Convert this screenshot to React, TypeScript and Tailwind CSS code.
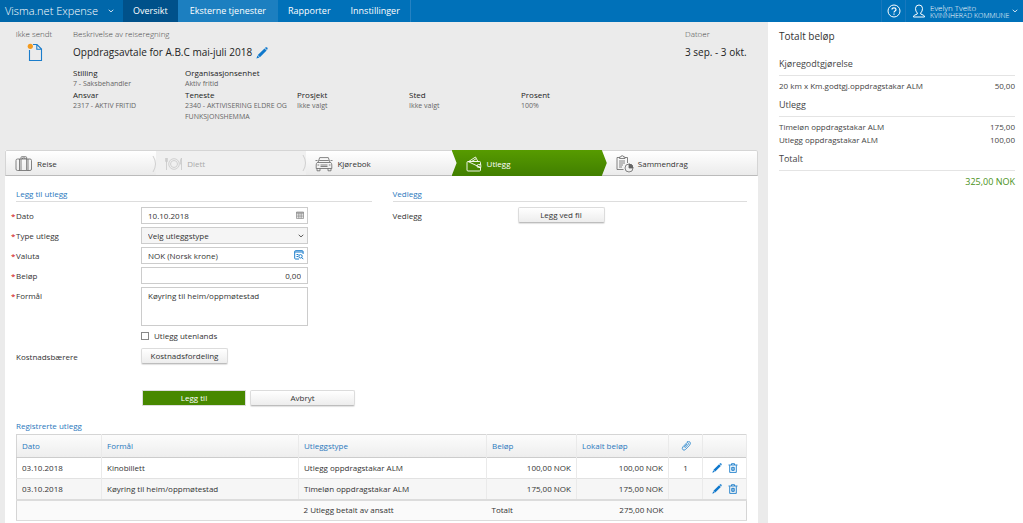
import React from "react";

const PencilIcon = ({ className }: { className: string }) => (
  <svg viewBox="0 0 12 12" className={className} aria-hidden="true">
    <path d="M1.800 8.100 8.500 1.400l2.100 2.100-6.700 6.700zM9 .9l.7-.6q.8-.4 1.500.3t.3 1.500l-.5.800zM1.500 8.600l1.900 1.900L.4 11.600z" fill="#0f78cc" />
  </svg>
);

const TrashIcon = () => (
  <svg viewBox="0 0 10 10" className="size-[10px]" fill="none" stroke="#1b7dcb" strokeWidth="0.9" aria-hidden="true">
    <path d="M.5 2h9M3.500 2V.7h3V2M1.700 2.200v7.200h6.600V2.200" />
    <path d="M3.700 4.300h2.600v3H3.700zM5 4v3.800" />
  </svg>
);

const ClipIcon = () => (
  <svg viewBox="0 0 12 12" className="mx-auto size-[10px]" fill="none" stroke="#3b8fd0" strokeWidth="1.100" aria-hidden="true">
    <path d="M4.500 8.500 8.700 4q.9-1.200-.1-1.900T6.800 2.300L2.300 7Q.8 9 2.200 10.400T5.400 10.200L10.400 5q1.800-2.400.2-3.900T7 1.200M3.600 7.400 7.400 3.500" />
  </svg>
);

const ChevronDown = ({ className }: { className: string }) => (
  <svg viewBox="0 0 6 4" className={className} fill="none" stroke="currentColor" strokeWidth="0.8" aria-hidden="true">
    <path d="M.7.8 3 2.900 5.300.8" />
  </svg>
);

const DocumentIcon = () => (
  <svg viewBox="0 0 17 20" className="h-5 w-[17px]" fill="none" aria-hidden="true">
    <path d="M7 2.500h4l4.500 4.500v11.500h-12V8M10.800 2.500v4.700h4.700" stroke="#1b7dcb" strokeWidth="1.100" />
    <circle cx="4.300" cy="4.300" r="2.600" fill="#f39a1e" />
  </svg>
);

const SuitcaseIcon = () => (
  <svg viewBox="0 0 18 16" className="h-4 w-[18px]" fill="none" stroke="#666" strokeWidth="0.8" aria-hidden="true">
    <rect x="1" y="3" width="15.500" height="11.500" rx="1.500" />
    <path d="M4.500 3v11.500M13 3v11.500M6 14V1.500q0-.8.800-.8h4q.8 0 .8.800V14M7.500 3V2h2.600v1" />
  </svg>
);

const PlateIcon = () => (
  <svg viewBox="0 0 18 14" className="h-[14px] w-[18px]" fill="none" stroke="#c8c8c8" strokeWidth="0.8" aria-hidden="true">
    <circle cx="9" cy="7" r="5.300" />
    <circle cx="9" cy="7" r="3.500" />
    <path d="M1.500 1v12M.6 1v3.500q.9 1 1.800 0V1M16.500 13V1q-1.400 1-1.200 6h1.200" />
  </svg>
);

const CarIcon = () => (
  <svg viewBox="0 0 18 16" className="h-4 w-[18px]" fill="none" stroke="#666" strokeWidth="0.8" aria-hidden="true">
    <path d="M3 6.500 4.700 1.600h8.600L15 6.500M2.200 6.500h13.600q1 .8 1 2.500v3.500H1.200V9q0-1.700 1-2.500zM.5 4.500h2M15.500 4.500h2M2 12.500v2.300h3v-2.300M13 12.500v2.300h3v-2.300M5.500 9h7M5.500 10.500h7M2.500 9h1.700M13.800 9h1.700M4.200 4.500h9.600" />
  </svg>
);

const WalletIcon = () => (
  <svg viewBox="0 0 16 16" className="size-4" fill="none" stroke="#fff" strokeWidth="0.9" aria-hidden="true">
    <path d="M2 5.500h11.500q1 0 1 1v2M14.500 11.500V14q0 1-1 1H2q-1 0-1-1V6.500q0-1 1-1zM3 5.300 9.500 1l2.300 4.300M6 5.300l4-2.500M14.800 8.500h-2.300q-1.500 0-1.500 1.500t1.500 1.500h2.300zM13 10h.5" />
  </svg>
);

const ClipboardIcon = () => (
  <svg viewBox="0 0 18 18" className="size-[18px]" fill="none" stroke="#666" strokeWidth="0.8" aria-hidden="true">
    <path d="M7.500 14.500H1V2.500h2.500M9 2.500h2.500V8M3.500 3.500V2h1.300q0-1.300 1.400-1.300T7.600 2H9v1.500zM3 6h6M3 8h6M3 10h4M3 12h3" />
    <circle cx="13" cy="13" r="4" />
    <path d="M13 13V9q4 .2 4 4z" fill="#666" />
  </svg>
);

const CalendarIcon = () => (
  <svg viewBox="0 0 8 8" className="size-2" fill="none" stroke="#777" strokeWidth="0.6" aria-hidden="true">
    <path d="M.5 1h7v6.500h-7zM.5 1.600h7M.5 2.400h7M.5 4.100h7M.5 5.800h7M2.800 2.400v5M5.200 2.400v5" />
  </svg>
);

const LookupIcon = () => (
  <svg viewBox="0 0 10 10" className="size-[10px]" fill="none" stroke="#1b7dcb" strokeWidth="1" aria-hidden="true">
    <path d="M5 9H1.500q-.8 0-.8-.8V1.500q0-.8.800-.8h6.800q.8 0 .8.800V4M.7 2h8.400M2.500 4.500h2M2.500 6.500h1.500" />
    <circle cx="6.500" cy="6.300" r="1.700" />
    <path d="m7.700 7.500 1.600 1.700" />
  </svg>
);

const TEXT_BUTTON =
  "h-4 rounded-[2px] border border-[#dcdcdc] border-b-[#bdbdbd] bg-linear-to-b from-white to-[#ededed] text-center leading-3 shadow-[0_1px_1px_rgba(0,0,0,0.12)]";
const FIELD = "block w-full border border-[#cccccc] px-[6px]";
const SECTION_TITLE = "border-b border-[#ddd] pb-px leading-3 text-[#2a78bd]";

function Nav() {
  const item = "flex h-full items-center px-[10px]";
  return (
    <header className="flex h-[22px] shrink-0 items-center bg-[#0071b9] text-white">
      <nav className="flex h-full items-center text-[9px]">
        <a href="#hjem" className="flex h-full w-[123px] items-center justify-between bg-[#0067aa] pr-[9px] pl-[5px] text-[11px] font-light">
          Visma.net Expense
          <ChevronDown className="h-1 w-[6px]" />
        </a>
        <a href="#oversikt" className={`${item} bg-[#00518a]`}>Oversikt</a>
        <a href="#tjenester" className="flex h-full items-center bg-[#1c7fc0] px-3">Eksterne tjenester</a>
        <a href="#rapporter" className={item}>Rapporter</a>
        <a href="#innstillinger" className={`${item} border-r border-[#2582c2]`}>Innstillinger</a>
      </nav>
      <div className="ml-auto flex h-full items-center">
        <button aria-label="Hjelp" className="flex h-full w-[25px] items-center justify-center border-x border-[#1878bd]">
          <svg viewBox="0 0 14 14" className="size-[14px]" fill="none" stroke="#fff" strokeWidth="1" aria-hidden="true">
            <circle cx="7" cy="7" r="6" />
            <path d="M5 5.600Q5 3.800 7 3.800t2 1.600Q9 6.400 8 7T7 8.500M7 9.500v1.200" strokeWidth="1.200" />
          </svg>
        </button>
        <button className="flex h-full items-center pr-[5px] pl-[6px] text-left">
          <svg viewBox="0 0 14 14" className="mr-1 size-[14px]" fill="none" stroke="#fff" strokeWidth="1" aria-hidden="true">
            <path d="M5.300 9Q3.500 7.500 3.500 4.300 3.700 1 7 1t3.500 3.300Q10.500 7.500 8.700 9v1l3 1.300q.8.500.8 1.700h-11q0-1.200.8-1.700l3-1.300z" />
          </svg>
          <span className="w-[82px]">
            <span className="block text-[8px] leading-[9px] font-light">Evelyn Tveito</span>
            <span className="block text-[7px] leading-2 font-light whitespace-nowrap">KVINNHERAD KOMMUNE</span>
          </span>
          <ChevronDown className="h-1 w-[6px]" />
        </button>
      </div>
    </header>
  );
}

function Info({ label, value }: { label: string; value: string }) {
  return (
    <div>
      <dt className="text-[#222]">{label}</dt>
      <dd className="text-[7px] text-[#666]">{value}</dd>
    </div>
  );
}

function ReportHeader() {
  return (
    <section className="flex h-[128px] shrink-0 px-[5px] pt-[6px]">
      <div className="flex w-[68px] flex-col items-center gap-[3px] pr-[10px] leading-[11px] font-light text-[#444]">
        Ikke sendt
        <DocumentIcon />
      </div>
      <div className="grow">
        <p className="leading-[11px] font-light text-[#444]">Beskrivelse av reiseregning</p>
        <h1 className="mt-[6px] flex items-center gap-1 text-[10px] leading-[15px] text-[#222]">
          Oppdragsavtale for A.B.C mai-juli 2018
          <button aria-label="Rediger beskrivelse"><PencilIcon className="size-3" /></button>
        </h1>
        <dl className="mt-[7px] grid grid-cols-[repeat(5,112px)] leading-[11px]">
          <Info label="Stilling" value="7 - Saksbehandler" />
          <Info label="Organisasjonsenhet" value="Aktiv fritid" />
          <div className="col-span-3" />
          <Info label="Ansvar" value="2317 - AKTIV FRITID" />
          <Info label="Teneste" value="2340 - AKTIVISERING ELDRE OG FUNKSJONSHEMMA" />
          <Info label="Prosjekt" value="Ikke valgt" />
          <Info label="Sted" value="Ikke valgt" />
          <Info label="Prosent" value="100%" />
        </dl>
      </div>
      <div className="w-[78px] shrink-0">
        <p className="leading-[11px] font-light text-[#444]">Datoer</p>
        <p className="mt-[6px] text-[10px] leading-[15px] text-[#222]">3 sep. - 3 okt.</p>
      </div>
    </section>
  );
}

const Separator = () => (
  <svg viewBox="0 0 6 18" className="absolute top-1 -left-1 h-[18px] w-[6px]" fill="none" stroke="#d0d0d0" aria-hidden="true">
    <path d="M1 1Q6 9 1 17" />
  </svg>
);

function Steps() {
  const step = "relative flex h-full w-full items-center gap-1 pt-[2px] pl-[9px]";
  return (
    <nav className="h-[26px] rounded-t-[2px] border border-[#d5d5d5] border-b-[#bbb] bg-linear-to-b from-white to-[#ebebeb]">
      <ol className="-my-px grid h-[26px] grid-cols-5">
        <li><button className={step}><SuitcaseIcon />Reise</button></li>
        <li className="my-px bg-[#f0f0f0]"><button disabled className={`${step} text-[#aaa]`}><Separator /><PlateIcon />Diett</button></li>
        <li><button className={step}><Separator /><CarIcon />Kjørebok</button></li>
        <li className="-ml-[5px]">
          <button aria-current="step" className="flex h-full w-full items-center gap-[5px] bg-linear-to-b from-[#579b00] to-[#417f00] pt-[2px] pl-[14px] text-white [clip-path:polygon(0_0,calc(100%-5px)_0,100%_50%,calc(100%-5px)_100%,0_100%,5px_50%)]">
            <WalletIcon />Utlegg
          </button>
        </li>
        <li><button className={step}><ClipboardIcon />Sammendrag</button></li>
      </ol>
    </nav>
  );
}

function Row({ id, label, required = false, children }: { id: string; label: string; required?: boolean; children: React.ReactNode }) {
  return (
    <div className="flex items-start">
      <label htmlFor={id} className="w-[130px] shrink-0 leading-[17px]">
        <span className="inline-block w-[5px] text-[#c00]">{required ? "*" : ""}</span>
        {label}
      </label>
      <div className="relative w-[167px]">{children}</div>
    </div>
  );
}

function ExpenseForm() {
  return (
    <form className="flex flex-col">
      <h2 className={`${SECTION_TITLE} ml-[5px]`}>Legg til utlegg</h2>
      <div className="mt-[5px] flex flex-col gap-[3px]">
        <Row id="dato" label="Dato" required>
          <input id="dato" defaultValue="10.10.2018" className={`${FIELD} h-[17px] bg-white`} />
          <span className="absolute top-1 right-1"><CalendarIcon /></span>
        </Row>
        <Row id="type" label="Type utlegg" required>
          <select id="type" className={`${FIELD} h-[17px] appearance-none bg-[#f5f5f5]`}>
            <option>Velg utleggstype</option>
          </select>
          <ChevronDown className="absolute top-[7px] right-1 h-1 w-[6px]" />
        </Row>
        <Row id="valuta" label="Valuta" required>
          <input id="valuta" defaultValue="NOK (Norsk krone)" className={`${FIELD} h-[17px] bg-white`} />
          <button type="button" aria-label="Velg valuta" className="absolute top-[3px] right-1"><LookupIcon /></button>
        </Row>
        <Row id="belop" label="Beløp" required>
          <input id="belop" defaultValue="0,00" className={`${FIELD} h-[17px] bg-white text-right`} />
        </Row>
        <Row id="formal" label="Formål" required>
          <textarea id="formal" defaultValue="Køyring til heim/oppmøtestad" className={`${FIELD} h-[39px] resize-none bg-white pt-[2px] leading-3`} />
        </Row>
      </div>
      <label className="mt-1 ml-[130px] flex items-center gap-[5px] leading-3">
        <input type="checkbox" className="size-2 appearance-none border border-[#888] bg-white" />
        Utlegg utenlands
      </label>
      <div className="mt-[6px]">
        <Row id="kostnad" label="Kostnadsbærere">
          <button id="kostnad" type="button" className={`${TEXT_BUTTON} w-[87px]`}>Kostnadsfordeling</button>
        </Row>
      </div>
      <div className="mt-[25px] ml-[131px] flex gap-1">
        <button type="button" className="h-4 w-[104px] border border-[#ddd] bg-[#478800] leading-3 text-white">Legg til</button>
        <button type="button" className={`${TEXT_BUTTON} w-[105px]`}>Avbryt</button>
      </div>
    </form>
  );
}

const ROWS = [
  { purpose: "Kinobillett", kind: "Utlegg oppdragstakar ALM", amount: "100,00 NOK", files: "1", tone: "bg-white" },
  { purpose: "Køyring til heim/oppmøtestad", kind: "Timeløn oppdragstakar ALM", amount: "175,00 NOK", files: "", tone: "bg-[#f6f6f6]" },
];

function ExpenseTable() {
  const cell = "border-r border-[#eaeaea] px-[5px]";
  return (
    <section className="mt-[14px] px-[11px]">
      <h2 className="leading-3 text-[#2a78bd]">Registrerte utlegg</h2>
      <table className="mt-[2px] w-full table-fixed border-collapse border border-[#d5d5d5] text-left">
        <colgroup>
          <col className="w-[85px]" />
          <col />
          <col className="w-[188px]" />
          <col className="w-[90px]" />
          <col className="w-[92px]" />
          <col className="w-[34px]" />
          <col className="w-[44px]" />
        </colgroup>
        <thead>
          <tr className="h-[23px] border-b border-[#ccc] bg-linear-to-b from-[#fcfcfc] to-[#eee] text-[#2a78bd]">
            <th className={`${cell} font-normal`}>Dato</th>
            <th className={`${cell} font-normal`}>Formål</th>
            <th className={`${cell} font-normal`}>Utleggstype</th>
            <th className={`${cell} font-normal`}>Beløp</th>
            <th className={`${cell} font-normal`}>Lokalt beløp</th>
            <th className={cell} aria-label="Vedlegg"><ClipIcon /></th>
            <th className={cell} aria-label="Handlinger" />
          </tr>
        </thead>
        <tbody>
          {ROWS.map((row) => (
            <tr key={row.purpose} className={`h-[21px] border-b border-[#e2e2e2] ${row.tone}`}>
              <td className={cell}>03.10.2018</td>
              <td className={cell}>{row.purpose}</td>
              <td className={cell}>{row.kind}</td>
              <td className={`${cell} text-right`}>{row.amount}</td>
              <td className={`${cell} text-right`}>{row.amount}</td>
              <td className={`${cell} text-center`}>{row.files}</td>
              <td className={cell}>
                <div className="flex items-center justify-center gap-[6px]">
                  <button aria-label="Rediger"><PencilIcon className="size-[10px]" /></button>
                  <button aria-label="Slett"><TrashIcon /></button>
                </div>
              </td>
            </tr>
          ))}
        </tbody>
        <tfoot>
          <tr className="h-[21px] border-t-2 border-b border-[#dcdcdc] bg-[#fafafa]">
            <td colSpan={2} />
            <td className="px-[5px]">2 Utlegg betalt av ansatt</td>
            <td className="px-[5px]">Totalt</td>
            <td className="px-[5px] text-right">275,00 NOK</td>
            <td colSpan={2} />
          </tr>
        </tfoot>
      </table>
    </section>
  );
}

function SummaryLine({ label, amount }: { label: string; amount: string }) {
  return (
    <p className="flex justify-between leading-[13px]">
      <span>{label}</span>
      <span>{amount}</span>
    </p>
  );
}

function Summary() {
  const heading = "border-b border-[#e4e4e4] pb-[5px] text-[9px] leading-3";
  return (
    <aside className="w-[255px] shrink-0 bg-white pt-[6px] pr-2 pl-[11px] text-[#444]">
      <h2 className="text-[10px] leading-4 text-[#333]">Totalt beløp</h2>
      <h3 className={`${heading} mt-[14px]`}>Kjøregodtgjørelse</h3>
      <div className="pt-[3px]"><SummaryLine label="20 km x Km.godtgj.oppdragstakar ALM" amount="50,00" /></div>
      <h3 className={`${heading} mt-[7px]`}>Utlegg</h3>
      <div className="pt-[3px]">
        <SummaryLine label="Timeløn oppdragstakar ALM" amount="175,00" />
        <SummaryLine label="Utlegg oppdragstakar ALM" amount="100,00" />
      </div>
      <h3 className={`${heading} mt-[7px]`}>Totalt</h3>
      <p className="mt-1 text-right text-[9px] leading-[14px] text-[#4a9120]">325,00 NOK</p>
    </aside>
  );
}

export default function App() {
  return (
    <div className="flex h-screen flex-col overflow-hidden bg-[#ebebeb] font-['Open_Sans',sans-serif] text-[8px] text-[#333]">
      <Nav />
      <div className="flex min-h-0 grow">
        <div className="flex min-w-0 grow flex-col">
          <ReportHeader />
          <main className="mr-[10px] ml-[5px] grow bg-white">
            <Steps />
            <div className="grid grid-cols-2 pt-3">
              <div className="pr-[10px] pl-[6px]"><ExpenseForm /></div>
              <section className="px-[11px]">
                <h2 className={SECTION_TITLE}>Vedlegg</h2>
                <div className="mt-[5px] flex leading-[17px]">
                  <span className="w-[125px]">Vedlegg</span>
                  <button className={`${TEXT_BUTTON} w-[87px]`}>Legg ved fil</button>
                </div>
              </section>
            </div>
            <ExpenseTable />
          </main>
        </div>
        <Summary />
      </div>
    </div>
  );
}
